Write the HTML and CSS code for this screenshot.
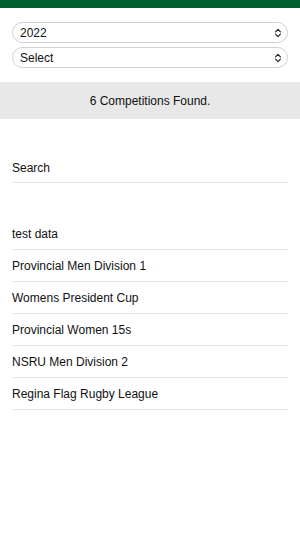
FILE: index.html
```html
<!DOCTYPE html>
<html>
<head>
<meta charset="utf-8">
<link rel="stylesheet" href="styles.css">
</head>
<body>
<div class="topbar"></div>
<div class="filters">
  <div class="select"><span>2022</span><svg class="chev" viewBox="0 0 10 12" width="8" height="10"><path d="M2 4.5 L5 1.5 L8 4.5 M2 7.5 L5 10.5 L8 7.5" fill="none" stroke="#222" stroke-width="1.5" stroke-linecap="round" stroke-linejoin="round"/></svg></div>
  <div class="select"><span>Select</span><svg class="chev" viewBox="0 0 10 12" width="8" height="10"><path d="M2 4.5 L5 1.5 L8 4.5 M2 7.5 L5 10.5 L8 7.5" fill="none" stroke="#222" stroke-width="1.5" stroke-linecap="round" stroke-linejoin="round"/></svg></div>
</div>
<div class="found">6 Competitions Found.</div>
<div class="search">Search</div>
<ul class="list">
  <li>test data</li>
  <li>Provincial Men Division 1</li>
  <li>Womens President Cup</li>
  <li>Provincial Women 15s</li>
  <li>NSRU Men Division 2</li>
  <li>Regina Flag Rugby League</li>
</ul>
</body>
</html>
```
FILE: styles.css
```css
html, body {
  margin: 0;
  padding: 0;
  background: #fff;
}
body {
  font-family: "Liberation Sans", Arial, sans-serif;
  font-size: 12px;
  color: #111;
}
.topbar {
  height: 8px;
  background: #00612e;
}
.filters {
  padding: 14px 12px 0;
  display: flex;
  flex-direction: column;
  gap: 4px;
}
.select {
  height: 21px;
  border: 1px solid #d0d0d0;
  border-radius: 11px;
  box-sizing: border-box;
  display: flex;
  align-items: center;
  justify-content: space-between;
  padding: 0 5px 0 7px;
}
.chev {
  display: block;
}
.found {
  margin-top: 14px;
  height: 37px;
  background: #e8e8e8;
  display: flex;
  align-items: center;
  justify-content: center;
}
.search {
  margin: 37px 12px 0;
  height: 27px;
  border-bottom: 1px solid #e6e6e6;
  box-sizing: border-box;
  display: flex;
  align-items: center;
  padding-bottom: 2px;
}
.list {
  list-style: none;
  margin: 35px 12px 0;
  padding: 0;
}
.list li {
  height: 32px;
  box-sizing: border-box;
  border-bottom: 1px solid #e6e6e6;
  display: flex;
  align-items: center;
}
```
